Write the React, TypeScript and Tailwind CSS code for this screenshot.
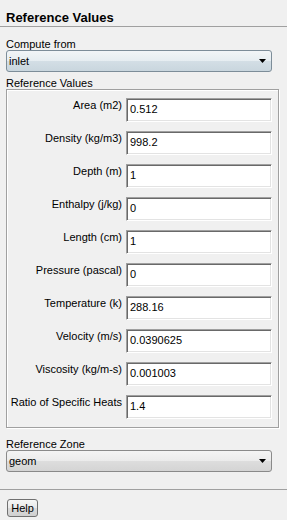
import React from "react";

const rows: [string, string][] = [
  ["Area (m2)", "0.512"],
  ["Density (kg/m3)", "998.2"],
  ["Depth (m)", "1"],
  ["Enthalpy (j/kg)", "0"],
  ["Length (cm)", "1"],
  ["Pressure (pascal)", "0"],
  ["Temperature (k)", "288.16"],
  ["Velocity (m/s)", "0.0390625"],
  ["Viscosity (kg/m-s)", "0.001003"],
  ["Ratio of Specific Heats", "1.4"],
];

function Arrow() {
  return (
    <svg width="7" height="4" viewBox="0 0 7 4" className="block">
      <path d="M0 0H7L3.5 4Z" fill="#000" />
    </svg>
  );
}

export default function App() {
  return (
    <div className="w-[287px] h-[520px] bg-[#f0f0f0] text-black text-[11px] leading-[12px] font-['Liberation_Sans',Arial,sans-serif] overflow-hidden">
      <div className="h-[27px] pl-[6px] pt-[10px] border-b border-[#a0a0a0]">
        <div className="text-[13px] leading-[16px] font-bold">Reference Values</div>
      </div>

      <div className="pl-[6px] pr-[15px]">
        <div className="mt-[11px] h-[12px]">Compute from</div>
        <div className="h-[22px] w-[266px] rounded-[3px] border border-[#7d8d99] bg-[linear-gradient(#f2f5f7,#e6edf1_50%,#d3dee5_52%,#c9d6de)] flex items-center justify-between pl-[2px] pr-[5px]">
          <span className="leading-[14px]">inlet</span>
          <Arrow />
        </div>

        <div className="mt-[5px] h-[12px]">Reference Values</div>
        <div className="w-[273px] border border-[#a0a0a0] shadow-[inset_1px_1px_0_#ffffff,1px_1px_0_#ffffff] pt-[8px] pb-[8px] flex flex-col gap-[9px]">
          {rows.map(([label, value]) => (
            <div key={label} className="flex items-start h-[24px]">
              <div className="w-[115px] text-right pt-[1px] whitespace-nowrap">{label}</div>
              <div className="ml-[4px] w-[146px] h-[24px] border border-t-[#a0a0a0] border-l-[#a0a0a0] border-b-white border-r-white shadow-[inset_1px_1px_0_#696969,inset_-1px_-1px_0_#e3e3e3] bg-white pl-[3px] pt-[4px] leading-[12px]">
                {value}
              </div>
            </div>
          ))}
        </div>

        <div className="mt-[10px] h-[12px]">Reference Zone</div>
        <div className="h-[22px] w-[266px] rounded-[3px] border border-[#8a8a8a] bg-[linear-gradient(#f4f4f4,#ebebeb_50%,#dddddd_52%,#d4d4d4)] flex items-center justify-between pl-[2px] pr-[5px]">
          <span className="leading-[14px]">geom</span>
          <Arrow />
        </div>
      </div>

      <div className="mt-[17px] border-t border-[#a0a0a0]" />
      <div className="pl-[7px] pt-[9px]">
        <div className="w-[31px] h-[18px] rounded-[3px] border border-[#707070] bg-[linear-gradient(#f6f6f6,#e8e8e8_50%,#dadada_52%,#d0d0d0)] flex items-center justify-center leading-[12px]">
          Help
        </div>
      </div>
    </div>
  );
}
